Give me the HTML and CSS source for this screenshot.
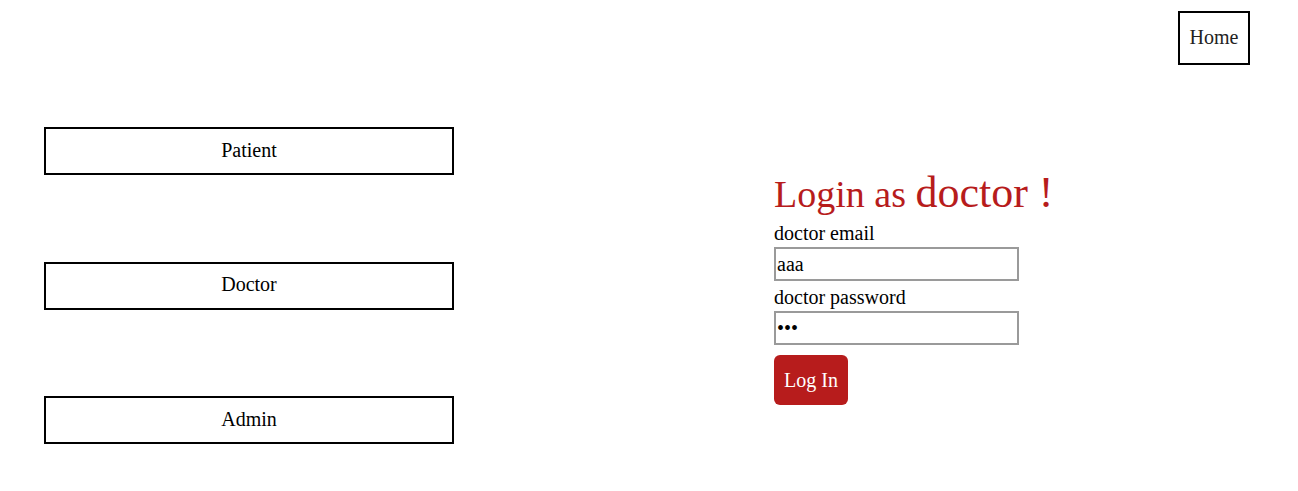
FILE: index.html
```html
<!DOCTYPE html>
<html>
<head>
<meta charset="utf-8">
<title>Login</title>
<link rel="stylesheet" href="styles.css">
</head>
<body>
<header class="topbar">
  <button class="home-btn">Home</button>
</header>
<main class="main">
  <nav class="roles">
    <button class="role-btn">Patient</button>
    <button class="role-btn">Doctor</button>
    <button class="role-btn">Admin</button>
  </nav>
  <section class="login">
    <h1 class="login-title">Login as <span class="login-role">doctor !</span></h1>
    <label class="field-label" for="email">doctor email</label>
    <input class="field-input" id="email" type="text" value="aaa">
    <label class="field-label second" for="pw">doctor password</label>
    <input class="field-input" id="pw" type="password" value="abc">
    <button class="submit-btn">Log In</button>
  </section>
</main>
</body>
</html>
```
FILE: styles.css
```css
* { box-sizing: border-box; }
body {
  margin: 0;
  font-family: "Liberation Serif", "Times New Roman", serif;
  font-size: 20px;
  color: #000;
  background: #fff;
}
button, input {
  font-family: "Liberation Serif", "Times New Roman", serif;
  font-size: 20px;
}
.topbar {
  display: flex;
  justify-content: flex-end;
  padding: 11px 48px 0 0;
}
.home-btn {
  background: #fff;
  border: 2px solid #000;
  width: 72px;
  height: 54px;
  padding: 0 0 2px;
  color: #222;
  line-height: 23px;
}
.main {
  display: flex;
  padding: 62px 0 0 44px;
}
.roles {
  display: flex;
  flex-direction: column;
  justify-content: space-between;
  height: 317px;
  width: 410px;
}
.role-btn {
  height: 48px;
  background: #fff;
  border: 2px solid #000;
  padding: 0 0 2px;
  color: #000;
  line-height: 23px;
}
.login {
  display: flex;
  flex-direction: column;
  align-items: flex-start;
  margin-left: 320px;
  padding-top: 44px;
}
.login-title {
  margin: 0 0 6px;
  font-weight: normal;
  font-size: 38px;
  line-height: 44px;
  color: #b71c1c;
}
.login-role { font-size: 44px; }
.field-label {
  display: block;
  line-height: 23px;
  margin-bottom: 2px;
}
.field-label.second { margin-top: 5px; }
.field-input {
  width: 245px;
  height: 34px;
  border: 2px solid #9a9a9a;
  padding: 0 1px;
  outline: none;
  color: #000;
}
.submit-btn {
  margin-top: 10px;
  height: 50px;
  padding: 0 10px;
  border: none;
  border-radius: 6px;
  background: #b71c1c;
  color: #fff;
}
```
